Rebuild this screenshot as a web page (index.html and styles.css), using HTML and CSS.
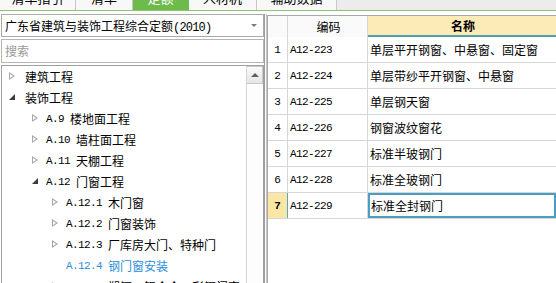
FILE: index.html
```html
<!DOCTYPE html>
<html lang="zh-CN">
<head>
    <meta charset="UTF-8">
    <title>定额</title>
    <link rel="stylesheet" href="styles.css">
</head>
<body>
    <div class="tabs">
        <div class="tab w1">清单指引</div>
        <div class="tab w2">清单</div>
        <div class="tab w3 active">定额</div>
        <div class="tab w4">人材机</div>
        <div class="tab w5">辅助数据</div>
    </div>

    <div class="main">
        <!-- 左侧：定额库 + 章节树 -->
        <div class="left">
            <div class="select">
                <span>广东省建筑与装饰工程综合定额<span class="no">(2010)</span></span>
                <span class="caret"></span>
            </div>
            <div class="search">搜索</div>
            <div class="tree">
                <div class="nodes">
                    <div class="node lv0"><span class="arrow closed"></span>建筑工程</div>
                    <div class="node lv0"><span class="arrow open"></span>装饰工程</div>
                    <div class="node lv1"><span class="arrow closed"></span><span class="no">A.9</span>楼地面工程</div>
                    <div class="node lv1"><span class="arrow closed"></span><span class="no">A.10</span>墙柱面工程</div>
                    <div class="node lv1"><span class="arrow closed"></span><span class="no">A.11</span>天棚工程</div>
                    <div class="node lv1"><span class="arrow open"></span><span class="no">A.12</span>门窗工程</div>
                    <div class="node lv2"><span class="arrow closed"></span><span class="no">A.12.1</span>木门窗</div>
                    <div class="node lv2"><span class="arrow closed"></span><span class="no">A.12.2</span>门窗装饰</div>
                    <div class="node lv2"><span class="arrow closed"></span><span class="no">A.12.3</span>厂库房大门、特种门</div>
                    <div class="node lv2 selected"><span class="arrow"></span><span class="no">A.12.4</span>钢门窗安装</div>
                    <div class="node lv2"><span class="arrow closed"></span><span class="no">A.12.5</span>塑钢、铝合金、彩钢门窗</div>
                </div>
                <div class="scrollbar">
                    <div class="scroll-up"></div>
                </div>
            </div>
        </div>

        <div class="splitter"></div>

        <!-- 右侧：定额子目表 -->
        <div class="grid">
            <div class="row head">
                <div class="cell num"></div>
                <div class="cell code">编码</div>
                <div class="cell name">名称</div>
            </div>
            <div class="row">
                <div class="cell num">1</div>
                <div class="cell code">A12-223</div>
                <div class="cell name">单层平开钢窗、中悬窗、固定窗</div>
            </div>
            <div class="row">
                <div class="cell num">2</div>
                <div class="cell code">A12-224</div>
                <div class="cell name">单层带纱平开钢窗、中悬窗</div>
            </div>
            <div class="row">
                <div class="cell num">3</div>
                <div class="cell code">A12-225</div>
                <div class="cell name">单层钢天窗</div>
            </div>
            <div class="row">
                <div class="cell num">4</div>
                <div class="cell code">A12-226</div>
                <div class="cell name">钢窗波纹窗花</div>
            </div>
            <div class="row">
                <div class="cell num">5</div>
                <div class="cell code">A12-227</div>
                <div class="cell name">标准半玻钢门</div>
            </div>
            <div class="row">
                <div class="cell num">6</div>
                <div class="cell code">A12-228</div>
                <div class="cell name">标准全玻钢门</div>
            </div>
            <div class="row current">
                <div class="cell num">7</div>
                <div class="cell code">A12-229</div>
                <div class="cell name">标准全封钢门</div>
            </div>
        </div>
    </div>
</body>
</html>
```

FILE: styles.css
```css
body {
    margin: 0;
    width: 556px;
    height: 283px;
    overflow: hidden;
    background: #ffffff;
    font-family: "Noto Sans CJK SC", sans-serif;
    font-size: 12px;
    color: #000;
}

.no {
    font-family: "Liberation Mono", monospace;
    font-size: 11px;
    letter-spacing: -0.6px;
    margin-right: 6px;
}

/* 顶部页签（上半部分被裁掉） */
.tabs {
    display: flex;
    height: 10px;
    overflow: hidden;
    background: #ececec;
    border-bottom: 1px solid #8fc46e;
}

.tab {
    height: 10px;
    line-height: 12px;
    margin-top: -8px;
    padding-bottom: 8px;
    text-align: center;
    background: #f8f8f8;
    border-right: 1px solid #c6c6c6;
    font-size: 13px;
}

.tab.w1 { width: 75px; }
.tab.w2 { width: 56px; }
.tab.w3 { width: 55px; }
.tab.w4 { width: 67px; }
.tab.w5 { width: 79px; }

.tab.active {
    background: #6cbb4b;
    color: #fff;
    border-right-color: #6cbb4b;
}

.main {
    display: flex;
    margin-top: 3px;
    height: 269px;
}

/* 左侧 */
.left {
    width: 263px;
    padding-left: 1px;
    display: flex;
    flex-direction: column;
    gap: 2px;
}

.select {
    height: 21px;
    border: 1px solid #a9a9a9;
    display: flex;
    align-items: center;
    justify-content: space-between;
    padding-left: 3px;
    padding-right: 6px;
}

.select .no {
    font-size: 12px;
    letter-spacing: -0.8px;
    margin: 0;
}

.caret {
    width: 0;
    height: 0;
    border-left: 3px solid transparent;
    border-right: 3px solid transparent;
    border-top: 3px solid #7a7a7a;
}

.search {
    height: 22px;
    line-height: 22px;
    border: 1px solid #b5b5b5;
    padding-left: 3px;
    color: #9a9a9a;
}

.tree {
    flex: 1;
    display: flex;
    border: 1px solid #a0a0a0;
    border-bottom: none;
    overflow: hidden;
}

.nodes {
    flex: 1;
}

.node {
    display: flex;
    align-items: center;
    height: 21px;
    white-space: nowrap;
}

.node.lv0 { padding-left: 7px; }
.node.lv1 { padding-left: 30px; }
.node.lv2 { padding-left: 50px; }

.node.selected {
    color: #2d8fdc;
}

.arrow {
    width: 7px;
    height: 9px;
    position: relative;
}

.lv0 .arrow { margin-right: 9px; }
.lv1 .arrow, .lv2 .arrow { margin-right: 7px; }

.arrow.closed::before {
    content: '';
    position: absolute;
    left: 0;
    top: 0;
    border-top: 4.5px solid transparent;
    border-bottom: 4.5px solid transparent;
    border-left: 6px solid #a8a8a8;
}

.arrow.closed::after {
    content: '';
    position: absolute;
    left: 1px;
    top: 2px;
    border-top: 2.5px solid transparent;
    border-bottom: 2.5px solid transparent;
    border-left: 3.5px solid #ffffff;
}

.arrow.open::before {
    content: '';
    position: absolute;
    left: 0;
    top: 1px;
    border-left: 6px solid transparent;
    border-bottom: 6px solid #3c3c3c;
}

.scrollbar {
    width: 16px;
    border-left: 1px solid #d4d4d4;
    background: #fdfdfd;
}

.scroll-up {
    height: 16px;
    border: 1px solid #c8c8c8;
    border-left: none;
    background: linear-gradient(#fafafa, #e6e6e6);
    position: relative;
}

.scroll-up::before {
    content: '';
    position: absolute;
    left: 4px;
    top: 6px;
    border-left: 4px solid transparent;
    border-right: 4px solid transparent;
    border-bottom: 4px solid #606060;
}

.splitter {
    width: 3px;
    background: #ffffff;
    border-left: 1px solid #9c9c9c;
    border-right: 1px solid #c4c4c4;
    box-sizing: border-box;
}

/* 右侧表格 */
.grid {
    flex: 1;
    border-left: 1px solid #a8a8a8;
    border-top: 1px solid #a8a8a8;
    margin-top: 1px;
}

.row {
    display: grid;
    grid-template-columns: 20px 80px 1fr;
    height: 26px;
    border-bottom: 1px solid #d6d6d6;
    box-sizing: border-box;
}

.cell {
    display: flex;
    align-items: center;
    border-right: 1px solid #d6d6d6;
    white-space: nowrap;
    overflow: hidden;
}

.cell.num {
    justify-content: center;
    font-family: "Liberation Mono", monospace;
    font-size: 11px;
}

.cell.code {
    padding-left: 2px;
    font-family: "Liberation Mono", monospace;
    font-size: 11px;
    letter-spacing: -0.6px;
}

.cell.name {
    padding-left: 2px;
    border-right: none;
}

.row.head {
    height: 21px;
    border-bottom: none;
}

.row.head .cell {
    justify-content: center;
    background: #fafafa;
    font-family: "Noto Sans CJK SC", sans-serif;
    font-size: 12px;
    letter-spacing: 0;
}

.row.head .cell.name {
    background: #fcebb6;
    font-weight: bold;
    border-bottom: 2px solid #4f9fae;
}

.row.current .cell.num {
    background: #fce6a6;
    font-weight: bold;
    border-right: 1px solid #58a7c6;
}

.row.current .cell.name {
    border: 2px solid #4a9ec4;
    padding-left: 1px;
}
```
